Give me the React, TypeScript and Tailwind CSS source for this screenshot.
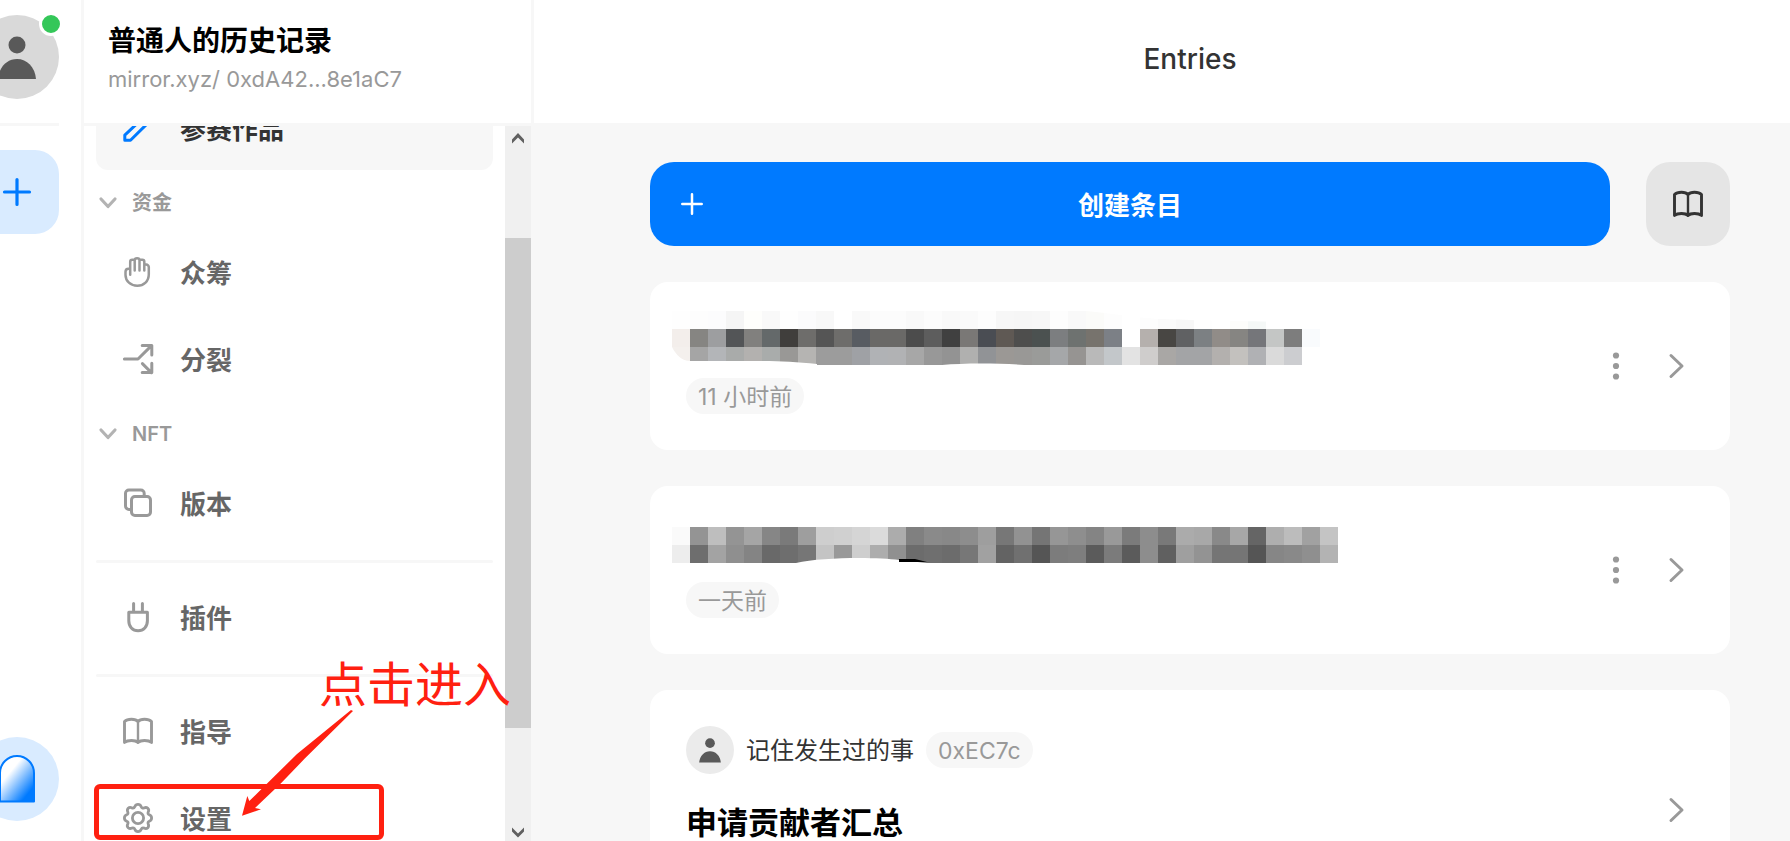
import React from "react";

const stroke = {
  fill: "none",
  stroke: "currentColor",
  strokeWidth: 2,
  strokeLinecap: "round" as const,
  strokeLinejoin: "round" as const,
};

function Pencil() {
  return (
    <svg viewBox="0 0 24 24" className="size-9 shrink-0 text-[#007aff]" {...stroke} aria-hidden="true">
      <path d="M15.5 5.2 18.8 8.5 7 20.2H3.2V16.7z" />
    </svg>
  );
}

function Hand() {
  return (
    <svg viewBox="0 0 36 36" className="size-9 shrink-0" {...stroke} strokeWidth={2.5} aria-hidden="true">
      <path d="M10.200 20.700V7.800a2 2 0 0 1 2-2h2.600M14.700 16.500V6.200c0-1.200 1-2 2.400-2s2.400.8 2.400 2v10.300M19.500 5.800h2.800a2 2 0 0 1 2 2v8.700M24.300 10.500h1.900a2.600 2.600 0 0 1 2.600 2.600v7.100c0 6.900-4.900 11.600-11.500 11.600S5.500 27.100 5.500 21v-3.200c0-1.900 1.200-3 3-3h1.700" />
    </svg>
  );
}

function Split() {
  return (
    <svg viewBox="0 0 36 36" className="size-9 shrink-0" {...stroke} strokeWidth={3} aria-hidden="true">
      <path d="M4.400 18H18L31.500 4.600M22.200 4.400h9.600v9.600M22.400 22.600l9 9M31.800 22.200v9.400h-9.600" />
    </svg>
  );
}

function Copies() {
  return (
    <svg viewBox="0 0 36 36" className="size-9 shrink-0" {...stroke} strokeWidth={3} aria-hidden="true">
      <rect x="11.500" y="11.500" width="19" height="19" rx="3.400" />
      <path d="M11.500 24.400H9A3.400 3.400 0 0 1 5.500 21V8.500A3.400 3.400 0 0 1 9 5h11.800a3.400 3.400 0 0 1 3.400 3.500v3" />
    </svg>
  );
}

function Plug() {
  return (
    <svg viewBox="0 0 36 36" className="size-9 shrink-0" {...stroke} strokeWidth={3} aria-hidden="true">
      <path d="M13.600 4.600V13M22.400 4.600V13M8.800 13.200h18.600v8.600c0 6-3.800 10-9.300 10s-9.300-4-9.300-10z" />
    </svg>
  );
}

function Book({ className }: { className: string }) {
  return (
    <svg viewBox="0 0 36 36" className={className} {...stroke} strokeWidth={2.9} aria-hidden="true">
      <path d="M18 8.500C15.500 5.500 7.500 5.500 4.500 8.500v21c3-2.600 11-2.600 13.500 0 2.500-2.600 10.500-2.600 13.500 0v-21c-3-3-11-3-13.500 0z" />
      <path d="M18 8.500v21" strokeWidth={2.400} />
    </svg>
  );
}

function Gear() {
  return (
    <svg viewBox="0 0 36 36" className="size-9 shrink-0" {...stroke} strokeWidth={2.8} aria-hidden="true">
      <circle cx="18" cy="18" r="5.600" />
      <path d="M14.800 6.700C15.400 5.200 16.500 4.400 18 4.400s2.600.8 3.200 2.300c.5 1.300 1.600 1.700 2.800 1.200 1.500-.7 2.800-.5 3.800.4 1 1 1.200 2.400.4 3.800-.5 1.200-.1 2.200 1.100 2.700 1.500.6 2.300 1.700 2.300 3.200s-.8 2.600-2.300 3.200c-1.200.5-1.600 1.500-1.100 2.700.7 1.500.5 2.800-.4 3.800-1 1-2.300 1.200-3.800.4-1.200-.5-2.200-.1-2.800 1.200-.6 1.500-1.700 2.300-3.200 2.300s-2.600-.8-3.200-2.300c-.5-1.300-1.600-1.700-2.800-1.200-1.500.7-2.800.5-3.800-.4-1-1-1.200-2.400-.4-3.800.5-1.200.1-2.200-1.100-2.700-1.500-.6-2.300-1.700-2.300-3.200s.8-2.600 2.300-3.200c1.200-.5 1.600-1.500 1.100-2.700-.7-1.500-.5-2.800.4-3.800 1-1 2.300-1.200 3.800-.4 1.200.5 2.200.1 2.800-1.200z" />
    </svg>
  );
}

function Plus({ className }: { className: string }) {
  return (
    <svg viewBox="0 0 36 36" className={className} {...stroke} strokeWidth={3.2} aria-hidden="true">
      <path d="M18 5.500v25M5.500 18h25" />
    </svg>
  );
}

function Person({ className }: { className: string }) {
  return (
    <svg viewBox="0 0 84 84" className={className} fill="#595959" aria-hidden="true">
      <circle cx="42" cy="30" r="8.500" />
      <path d="M23 64c1-12 9-20 19-20s18 8 19 20z" />
    </svg>
  );
}

function ChevronRight() {
  return (
    <svg viewBox="0 0 36 36" className="size-9" {...stroke} strokeWidth={3} aria-hidden="true">
      <path d="M13 7.500 24 18 13 28.500" />
    </svg>
  );
}

function NavItem({ icon, label, active = false }: { icon: React.ReactNode; label: string; active?: boolean }) {
  return (
    <a
      href="#"
      className={
        active
          ? "flex h-[84px] shrink-0 items-center gap-6 rounded-xl bg-[#f7f7f7] pl-6 text-[26px] font-bold text-[#333]"
          : "flex h-[84px] shrink-0 items-center gap-6 rounded-xl pl-6 text-[26px] font-bold text-[#666]"
      }
    >
      <span className={active ? "" : "text-[#999]"}>{icon}</span>
      <span className="pt-0.5">{label}</span>
    </a>
  );
}

function Section({ label }: { label: string }) {
  return (
    <button type="button" className="flex h-[54px] shrink-0 items-center gap-3 pt-1.5 text-xl font-semibold text-[#999]">
      <svg viewBox="0 0 24 24" className="size-6 text-[#b3b3b3]" {...stroke} strokeWidth={3.2} aria-hidden="true">
        <path d="M5 8l7 7.500L19 8" />
      </svg>
      {label}
    </button>
  );
}

function Divider() {
  return <hr className="mt-3 mb-[9px] h-[3px] shrink-0 rounded border-0 bg-[#f7f7f7]" />;
}

const CELL = 18;

function Mosaic({ rows, children }: { rows: string[][]; children?: React.ReactNode }) {
  const width = Math.max(...rows.map((r) => r.length)) * CELL;
  const height = rows.length * CELL;
  return (
    <svg width={width} height={height} viewBox={`0 0 ${width} ${height}`} shapeRendering="crispEdges" className="-ml-[14px]" role="img" aria-label="Hidden title">
      {rows.map((row, y) =>
        row.map((c, x) => <rect key={`${x}-${y}`} x={x * CELL} y={y * CELL} width={CELL} height={CELL} fill={`#${c}`} />),
      )}
      {children}
    </svg>
  );
}

const first = [
  "fefefe fdfdfd fcfcfd f5f5f5 fefefc f9f9f9 fefefe fbfbfc f8f8f8 ffffff f9f9f9 fcfcfc fcfcfc f9f9f9 fcfcfc f9f9f9 fafafa fdfdfd f7f7f7 f6f6f6 f7f7f7 fdfdfd f9f9f9 fbfbf9 fdfdfd ffffff fdfdfd fafafa f7f7f7 fefefe ffffff fdfdfb f5f8f7 ffffff ffffff ffffff",
  "f3eeeb 868582 9d9ea0 535557 81807e 64696a 403e3c 6e6d6b 555555 6e6d6b 585c62 6a6967 6a6967 4c4c4c 5d5d5d 404040 7a7876 4a4d53 5f5954 4e4e4d 4b5150 7c7e80 6e7270 77736d 7c8086 ffffff b5b0ad 484643 606163 7c8083 918c88 868582 75767a c4c6c5 7d7d7d f9fbfd",
  "f4f0ed a5a5a5 b3b5b8 a9abaa b3b1af a9acab 999896 b5b4b2 9c9c9c 9c9c9c 9fa1a5 b0b2b5 b1b2b4 a7a7a7 989898 939393 b0b0af 919396 9b9895 999896 9a9b99 a5a7a9 969492 b9b9b9 c3c7ca e3e3e3 cfcdcc a9a7a5 a3a4a6 a3a4a6 b3b0ae c3c1be b0b1b4 dadada cccdd0 ffffff",
].map((r) => r.split(" "));

const second = [
  "fafafa 949494 bebebe 949494 a5a5a5 868686 7a7a7a 9e9e9e cecece d0d0d0 d5d5d5 dbdbdb acacac 808080 8a8a8a 888888 8d8d8d 9e9e9e 777777 929292 757575 969696 8e8e8e 848484 999999 7b7b7b 8d8d8d 797979 ababab a8a8a8 898989 a7a7a7 656565 aeaeae bcbcbc a1a1a1 c4c4c4",
  "ededed 6e6e6e a3a3a3 8f8f8f 848484 696969 6e6e6e 767676 c4c4c4 999999 cecece adadad 909090 6c6c6c 6f6f6f 6c6c6c 777777 a1a1a1 636363 707070 555555 7c7c7c 7e7e7e 5b5b5b 7b7b7b 5b5b5b 8d8d8d 606060 9f9f9f 939393 757575 757575 555555 868686 898989 8f8f8f b3b3b3",
].map((r) => r.split(" "));

function Chip({ children }: { children: React.ReactNode }) {
  return <span className="flex h-9 items-center rounded-full bg-[#f7f7f7] px-3 pt-0.5 text-[23px] text-[#999]">{children}</span>;
}

function More() {
  return (
    <button type="button" aria-label="More" className="flex h-9 w-6 items-center justify-center">
      <svg viewBox="0 0 24 36" className="h-9 w-6" fill="#999" aria-hidden="true">
        <circle cx="12" cy="7.500" r="3.100" />
        <circle cx="12" cy="18" r="3.100" />
        <circle cx="12" cy="28.500" r="3.100" />
      </svg>
    </button>
  );
}

function Card({ children, menu = false, tall = false }: { children: React.ReactNode; menu?: boolean; tall?: boolean }) {
  return (
    <article
      className={
        tall
          ? "flex h-60 shrink-0 items-center justify-between rounded-[18px] bg-white px-9"
          : "flex h-42 shrink-0 items-center justify-between rounded-[18px] bg-white px-9"
      }
    >
      <div className="flex h-full flex-col items-start">{children}</div>
      <div className="flex items-center gap-[30px] text-[#999]">
        {menu && <More />}
        <a href="#" aria-label="Open entry">
          <ChevronRight />
        </a>
      </div>
    </article>
  );
}

export default function App() {
  return (
    <div className="relative flex h-screen overflow-hidden bg-white font-[Inter,'Noto_Sans_CJK_SC',sans-serif]">
      <nav aria-label="Spaces" className="flex w-[84px] shrink-0 flex-col items-end overflow-hidden border-r-[3px] border-[#f7f7f7] pr-[22px]">
        <div className="relative mt-[15px] size-[84px] shrink-0 rounded-full bg-[#d9d9d9]">
          <Person className="size-full" />
          <span className="absolute -top-[3px] -right-[4px] size-6 rounded-full border-[3px] border-white bg-[#34c759]" />
        </div>
        <hr className="mt-6 h-[3px] w-[84px] shrink-0 border-0 bg-[#f7f7f7]" />
        <button type="button" aria-label="Add space" className="mt-6 flex size-[84px] shrink-0 items-center justify-center rounded-3xl bg-[#d9ebff] text-[#007aff]">
          <Plus className="size-9" />
        </button>
        <a href="#" aria-label="Mirror" className="mt-auto mb-5 flex size-[84px] shrink-0 items-center justify-center rounded-full bg-[#d9ebff]">
          <svg viewBox="0 0 36 48" className="h-12 w-9" aria-hidden="true">
            <defs>
              <linearGradient id="arch" x1="0.2" y1="0.2" x2="0.8" y2="0.85">
                <stop offset="0.2" stopColor="#fff" />
                <stop offset="1" stopColor="#007aff" />
              </linearGradient>
            </defs>
            <path d="M1 46.500V18a17 17 0 0 1 34 0v28.500z" fill="url(#arch)" stroke="#007aff" strokeWidth="2" strokeLinejoin="round" />
          </svg>
        </a>
      </nav>

      <aside className="flex w-[450px] shrink-0 flex-col border-r-[3px] border-[#f7f7f7]">
        <header className="h-[126px] shrink-0 border-b-[3px] border-[#f7f7f7] px-6 pt-[21px]">
          <h1 className="text-[28px] leading-10 font-bold text-black">普通人的历史记录</h1>
          <p className="text-[22px] leading-9 text-[#999]">mirror.xyz/ 0xdA42...8e1aC7</p>
        </header>
        <div className="flex min-h-0 flex-1">
          <div className="flex min-w-0 flex-1 flex-col justify-end overflow-hidden px-3">
            <div className="-mb-[19px] flex flex-col gap-[3px]">
              <NavItem icon={<Pencil />} label="参赛作品" active />
              <Section label="资金" />
              <NavItem icon={<Hand />} label="众筹" />
              <NavItem icon={<Split />} label="分裂" />
              <Section label="NFT" />
              <NavItem icon={<Copies />} label="版本" />
              <Divider />
              <NavItem icon={<Plug />} label="插件" />
              <Divider />
              <NavItem icon={<Book className="size-9" />} label="指导" />
              <NavItem icon={<Gear />} label="设置" />
            </div>
          </div>
          <div className="flex w-[26px] shrink-0 flex-col items-center bg-[#f0f0f0] text-[#606060]" aria-hidden="true">
            <svg viewBox="0 0 26 26" className="size-[26px] shrink-0" fill="currentColor">
              <path d="M7 13.500 13 7l6 6.500V17.500L13 11.500 7 17.500z" />
            </svg>
            <span className="mt-[86px] w-full flex-[490] bg-[#cdcdcd]" />
            <span className="flex-[87]" />
            <svg viewBox="0 0 26 26" className="size-[26px] shrink-0" fill="currentColor">
              <path d="M7 12.500v4L13 22.500l6-6v-4l-6 6z" />
            </svg>
          </div>
        </div>
      </aside>

      <main className="flex min-w-0 flex-1 flex-col bg-[#f7f7f7]">
        <header className="flex h-[123px] shrink-0 items-center justify-center bg-white pb-1.5 pl-14">
          <h2 className="text-[28px] font-medium text-[#333]">Entries</h2>
        </header>
        <div className="flex min-h-0 flex-1 flex-col gap-9 overflow-hidden pt-[39px] pr-[60px] pl-[116px]">
          <div className="flex shrink-0 gap-9">
            <button type="button" className="flex h-[84px] flex-1 items-center rounded-3xl bg-[#007aff] px-6 text-[26px] font-bold text-white">
              <Plus className="size-9 p-1" />
              <span className="flex-1 pt-0.5 pr-9 text-center">创建条目</span>
            </button>
            <button type="button" aria-label="Guide" className="flex size-[84px] items-center justify-center rounded-3xl bg-[#e5e5e5] text-[#333]">
              <Book className="size-9" />
            </button>
          </div>

          <Card menu>
            <div className="flex flex-col items-start gap-[13px] pt-[29px]">
              <Mosaic rows={first}>
                <path d="M0 36v18h145v-1C125 51 110 50 90 50H18C10 50 4 44 0 36z" fill="#fff" shapeRendering="auto" />
                <path d="M270 54c22-2 55-2 82 0z" fill="#fff" shapeRendering="auto" />
                <path d="M414 0h240v18c-14-4-28-6-42-7-60-1-100-2-126-3-26-2-50-6-72-8z" fill="#fff" shapeRendering="auto" />
              </Mosaic>
              <Chip>11 小时前</Chip>
            </div>
          </Card>

          <Card menu>
            <div className="flex flex-col items-start gap-[19px] pt-[41px]">
              <Mosaic rows={second}>
                <path d="M124 36C150 30 205 30 227 33l28 3z" fill="#fff" shapeRendering="auto" />
                <path d="M227 32v3h28l-12-3z" fill="#000" shapeRendering="auto" />
              </Mosaic>
              <Chip>一天前</Chip>
            </div>
          </Card>

          <Card tall>
            <div className="flex items-center gap-3 pt-9">
              <span className="size-12 rounded-full bg-[#ebebeb]">
                <Person className="size-full" />
              </span>
              <span className="pt-0.5 text-2xl text-[#333]">记住发生过的事</span>
              <Chip>0xEC7c</Chip>
            </div>
            <h3 className="mt-[25px] text-[31px] leading-[48px] font-bold text-black">申请贡献者汇总</h3>
          </Card>
        </div>
      </main>

      <div className="absolute bottom-[1px] left-[94px] h-[56px] w-[290px] rounded-md border-[5px] border-[#ff2010]" />
      <p className="absolute top-[655px] left-[319px] text-5xl leading-[60px] text-[#ff2010]">点击进入</p>
      <svg viewBox="0 0 112 108" className="absolute top-[709px] left-[241px] h-27 w-28" fill="#ff2010" aria-hidden="true">
        <path d="M110 1 112 2 64 49.300 40 74.300 14 99 20 100.300 1 106.700 6.300 87 8.300 92 22.300 78.300 56 45z" />
      </svg>
    </div>
  );
}
